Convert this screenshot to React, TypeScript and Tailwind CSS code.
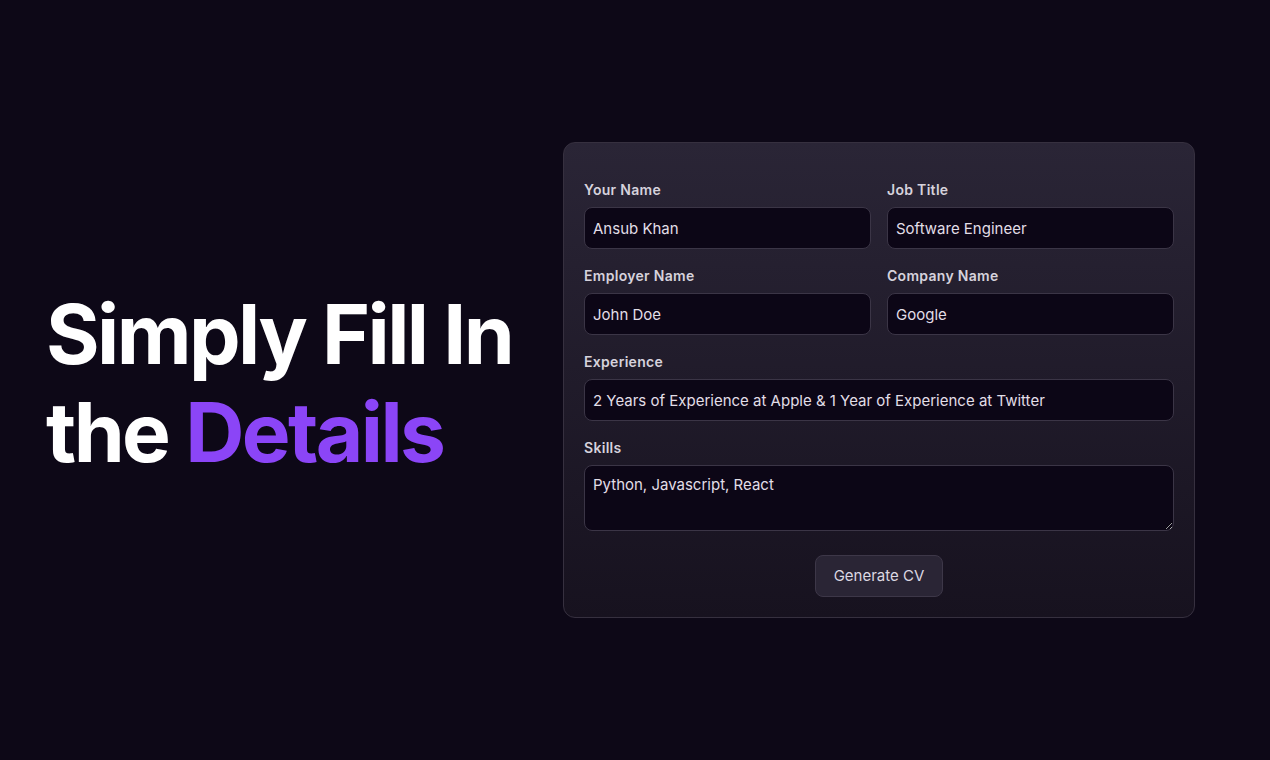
import React, { useState } from 'react';

const font = { fontFamily: 'Inter, "Noto Sans", sans-serif' };

const labelCls = 'text-[14px] font-semibold text-[#d6d2dc] leading-5 mb-[7px] tracking-[0.3px]';

const Field: React.FC<{ label: string; value: string; onChange: (v: string) => void }> = ({ label, value, onChange }) => (
  <div className="flex flex-col">
    <label className={labelCls}>{label}</label>
    <input
      value={value}
      onChange={(e) => onChange(e.target.value)}
      className="h-[42px] w-full px-2 rounded-lg bg-[#0c0616] border border-[#3b3546] text-[15px] text-[#e2dee7] outline-none"
    />
  </div>
);

export default function App() {
  const [form, setForm] = useState({
    name: 'Ansub Khan',
    job: 'Software Engineer',
    employer: 'John Doe',
    company: 'Google',
    experience: '2 Years of Experience at Apple & 1 Year of Experience at Twitter',
    skills: 'Python, Javascript, React',
  });

  const set = (k: keyof typeof form) => (v: string) => setForm({ ...form, [k]: v });

  return (
    <div className="min-h-screen w-full bg-[#0d0817] flex items-center" style={font}>
      <div className="pl-[46px] w-[563px] shrink-0 pt-2">
        <h1 className="text-[82px] leading-[98px] font-bold text-white tracking-[-2.6px]">
          Simply Fill In
          <br />
          the <span className="text-[#8b45f7]">Details</span>
        </h1>
      </div>

      <div className="w-[632px] rounded-xl border border-[#36303f] bg-gradient-to-b from-[#2a2536] to-[#17121f] px-5 pt-[37px] pb-5">
        <div className="grid grid-cols-2 gap-x-4 gap-y-[17px]">
          <Field label="Your Name" value={form.name} onChange={set('name')} />
          <Field label="Job Title" value={form.job} onChange={set('job')} />
          <Field label="Employer Name" value={form.employer} onChange={set('employer')} />
          <Field label="Company Name" value={form.company} onChange={set('company')} />
          <div className="col-span-2">
            <Field label="Experience" value={form.experience} onChange={set('experience')} />
          </div>
          <div className="col-span-2 flex flex-col">
            <label className={labelCls}>Skills</label>
            <textarea
              value={form.skills}
              onChange={(e) => set('skills')(e.target.value)}
              className="h-[66px] w-full px-2 py-[9px] rounded-lg bg-[#0c0616] border border-[#3b3546] text-[15px] leading-5 text-[#e2dee7] outline-none"
            />
          </div>
        </div>
        <div className="flex justify-center mt-6">
          <button className="h-[42px] w-[128px] rounded-lg bg-[#2a2535] border border-[#3d3748] text-[15px] text-[#dcd8e2]">
            Generate CV
          </button>
        </div>
      </div>
    </div>
  );
}
